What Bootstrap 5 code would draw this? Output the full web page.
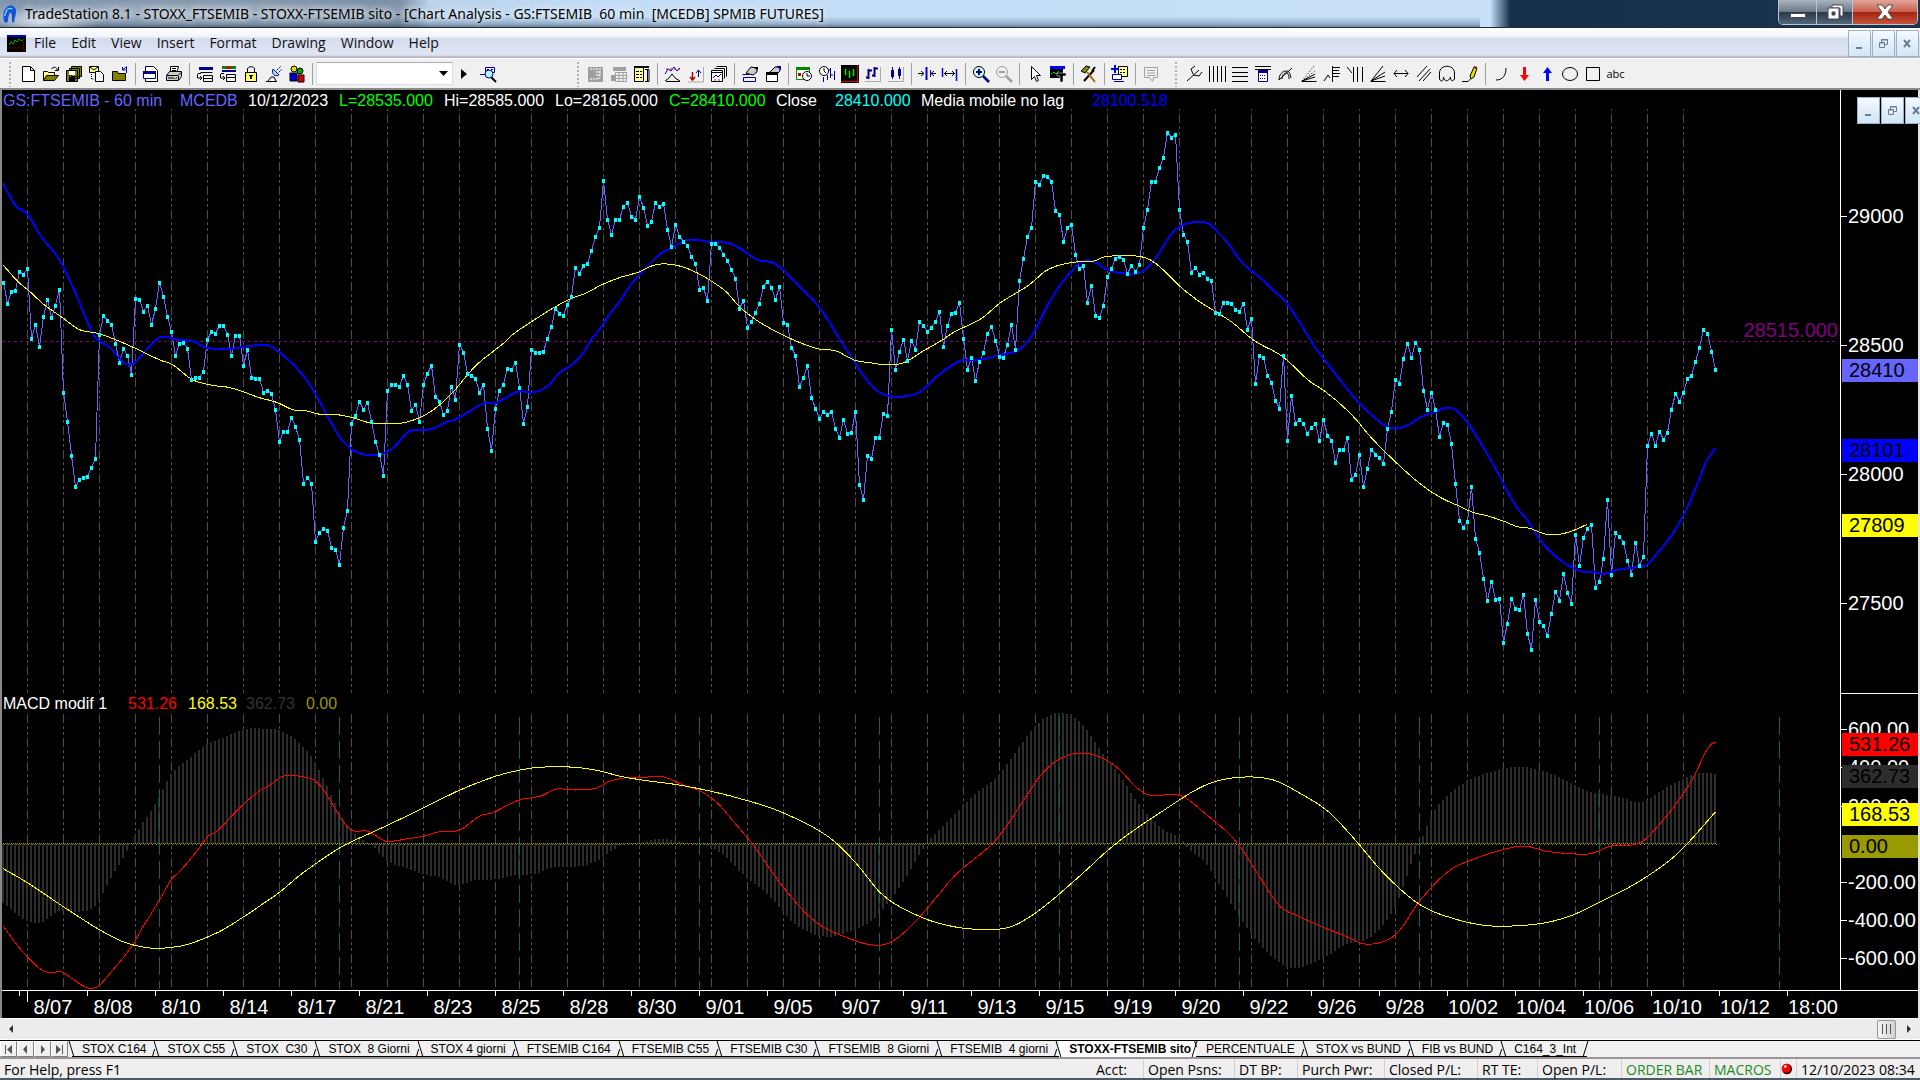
<!DOCTYPE html>
<html lang="en">
<head>
<meta charset="utf-8">
<meta name="viewport" content="width=device-width, initial-scale=1">
<title>TradeStation 8.1 - STOXX_FTSEMIB</title>
<link href="https://cdn.jsdelivr.net/npm/bootstrap@5.3.0/dist/css/bootstrap.min.css" rel="stylesheet">
<style>
  :root { --ui: "Open Sans", "Noto Sans", sans-serif; --plot: "Liberation Sans", Arial, sans-serif; }
  body { font: 14px/20px var(--ui); color: #000; background: #f0f0f0; }
  button, select { font: inherit; color: inherit; }
  .plain-btn { border: 0; padding: 0; background: none; }
  svg { display: block; }

  .title-strip { height: 28px; padding-left: 2px; border-bottom: 1px solid #1c2c3e;
    background:
      radial-gradient(ellipse 60px 14px at 40px 22px, #d5dde6 0, transparent 100%),
      radial-gradient(ellipse 300px 16px at 200px 14px, #c3cedb99 0, transparent 100%),
      linear-gradient(#0000 60%, #33516e55 88%, #22364b88) 0 0 / 1480px 100% no-repeat,
      linear-gradient(90deg, #8095ab 0, #7c90a6 400px, #b9d3ec 430px, #c3ddf6 620px, #c8e1f9 1490px, #16304b 1510px, #1b344f 100%); }
  .title-text { font-family: "Noto Sans", "Open Sans", sans-serif; white-space: pre; text-shadow: 0 0 6px #fff, 0 0 10px #fff8; }
  .win-group { height: 25px; width: 140px; border: 1px solid #b8c4d0; border-top: 0; border-radius: 0 0 5px 5px; overflow: hidden; margin-right: 2px; }
  .win-group button { height: 24px; display: grid; place-items: center; background: linear-gradient(#a9b4bf, #6d7a88 48%, #2a3a4b 52%, #566679); border-right: 1px solid #b8c4d0; }
  .win-min { width: 38px; } .win-max { width: 36px; }
  .win-group .win-close { flex: 1; border-right: 0; background: linear-gradient(#e0a699, #c9604c 48%, #a32410 52%, #c4543a); }

  .menu-strip { height: 30px; background: linear-gradient(#fff 0, #f1f3fa 30%, #d5dcee 34%, #e0e5f4 90%, #b4b4bd 97%); padding: 0 1px 0 7px; }
  .menu-strip a { color: #111; text-decoration: none; padding: 0 7px 0 8px; }
  .mdi-group button { width: 23px; height: 27px; display: grid; place-items: center; border: 1px solid #9db0c4; margin-left: 1px; background: linear-gradient(#f4f9fe, #e2effb 50%, #d3e6f7); }

  .tool-strip { height: 32px; background: #f0f0f0; border-top: 1px solid #fff; border-bottom: 2px solid #8a8a8a; }
  .tool-btn { width: 23px; height: 24px; display: grid; place-items: center; }
  .tool-sep { width: 8px; height: 22px; background: linear-gradient(#a0a0a0, #a0a0a0) 4px 0 / 1px 100% no-repeat; }
  .tool-grip { width: 4px; height: 26px; background: radial-gradient(circle, #b0b0b0 1px, transparent 1px) 0 0 / 4px 4px; }
  .grip-chart { margin-left: 77px; }
  .grip-draw { margin-left: 12px; }
  .abc-btn { font-size: 11px; }
  .combo-box { width: 137px; }
  .combo-box select { width: 100%; height: 23px; appearance: none; border: 1px solid #d9dfe6; border-top-color: #a9adb5; background: #fff; border-radius: 0; }
  .combo-box svg { right: 5px; top: 9px; pointer-events: none; }

  .chart-area { background: #000; border-left: 2px solid #8a8a8a; border-right: 2px solid #e4e4e4; font-family: var(--plot); color: #fff; min-height: 0; }
  .panel-row { min-height: 0; }
  .panel-price { flex: 604 1 0; }
  .panel-macd { flex: 296 1 0; }
  .plot-box { min-width: 0; min-height: 0; }
  .plot-box svg { width: 100%; height: 100%; position: absolute; inset: 0; }
  .plot-box svg * { vector-effect: non-scaling-stroke; fill: none; shape-rendering: crispEdges; }
  .legend-line { left: 1px; font-size: 16px; line-height: 20px; white-space: pre; }
  .price-legend { top: 1px; display: grid; grid-template-columns: 177px 68px 91px 105px 111px 114px 107px 59px 86px 171px auto; }
  .macd-legend { top: 0; display: grid; grid-template-columns: 125px 60px 58px 60px auto; }
  .axis-col { width: 78px; border-left: 1px solid #fff; font-size: 20px; line-height: 23px; }
  .panel-macd .axis-col { border-top: 1px solid #fff; margin-top: -1px; }
  .tick-label, .tick-box { left: 0; right: 0; height: 23px; margin-top: -11px; white-space: nowrap; }
  .tick-label { padding-left: 7px; }
  .tick-label::before { content: ""; position: absolute; left: 0; top: 11px; width: 6px; height: 1px; background: #fff; }
  .tick-box { left: 1px; padding-left: 7px; color: #000; }
  .level-label { right: 2px; font-size: 20px; line-height: 22px; margin-top: -23px; color: #800080; }
  .time-axis { height: 28px; border-top: 1px solid #fff; font-size: 20px; line-height: 24px; overflow: hidden; }
  .time-tick { top: 0; width: 1px; height: 5px; background: #fff; }
  .time-tick.long-tick { height: 11px; }
  .time-text { top: 4px; width: 60px; margin-left: -4px; text-align: center; }
  .mdi-float { right: -2px; top: 7px; width: 64px; overflow: hidden; }
  .mdi-float button { flex: none; }

  .scroll-strip { height: 22px; background: #ececec; border-top: 1px solid #fafafa; border-bottom: 1px solid #fff; padding: 0 5px; }
  .scroll-strip button { width: 12px; height: 18px; display: grid; place-items: center; }
  .scroll-strip .scroll-thumb { width: 19px; height: 19px; border: 1px solid #979797; border-radius: 2px; background: linear-gradient(90deg, #f4f4f4, #d4d4d4); margin-right: 7px; }

  .sheet-strip { height: 19px; background: #f0f0f0; border-top: 1px solid #000; border-bottom: 2px solid #9a9498; font: 12px/17px var(--plot); }
  .sheet-nav button { width: 17px; height: 16px; display: grid; place-items: center; border: 1px solid; border-color: #fff #808080 #808080 #fff; background: #f0f0f0; }
  .sheet-tabs { margin-left: 4px; }
  .sheet-tab { position: relative; height: 16px; padding: 0 11px 0 10px; color: #000; text-decoration: none; white-space: pre; border-bottom: 1px solid #000; }
  .sheet-tab::before { content: ""; position: absolute; left: -1px; top: 0; width: 1px; height: 16px; background: #000; transform: skewX(17deg); }
  .sheet-tab::after { content: ""; position: absolute; right: 3px; bottom: -1px; width: 1px; height: 8px; background: #000; transform: skewX(-17deg); }
  .sheet-tab:last-child::after, .sheet-tab.on::after { height: 16px; right: 1px; }
  .sheet-tab.on { background: #fff; font-weight: bold; border-color: #fff; padding-right: 5px; }
  .sheet-tab.on + .sheet-tab::before { height: 6px; top: 0; }

  .status-strip { height: 21px; background: #f0eeee; border-bottom: 2px solid #4a5a68; font-size: 14px; line-height: 21px; white-space: nowrap; }
  .status-cell { border-left: 1px solid #d2d0d0; padding-left: 4px; height: 19px; }
  .w-a { width: 47px; } .w-b { width: 91px; } .w-c { width: 63px; } .w-d { width: 87px; } .w-e { width: 93px; }
  .w-f { width: 60px; } .w-g { width: 84px; } .w-h { width: 88px; } .w-i { width: 71px; } .w-j { width: 16px; } .w-k { width: 124px; }
  .status-ok { color: #1c8a1c; }
</style>
<script src="https://cdn.jsdelivr.net/npm/bootstrap@5.3.0/dist/js/bootstrap.bundle.min.js"></script>
</head>
<body class="vh-100 d-flex flex-column overflow-hidden">

<header class="title-strip d-flex align-items-start flex-shrink-0">
  <svg class="mt-1 me-2" width="15" height="20" viewBox="0 0 16 20"><path d="M3 19C0 14 1 5 6 2c4-3 9 0 9 5 0 4-2 8-2 12h-2c-1-4 0-8-1-10-2-2-3 2-4 10z" fill="#1450d8"/><path d="M4 8c1-4 5-5 7-3M3 12c0-2 1-4 2-5" fill="none" stroke="#7fd0ff" stroke-width="1.500"/></svg>
  <span class="title-text pt-1">TradeStation 8.1 - STOXX_FTSEMIB - STOXX-FTSEMIB sito - [Chart Analysis - GS:FTSEMIB  60 min  [MCEDB] SPMIB FUTURES]</span>
  <div class="win-group d-flex ms-auto">
    <button class="plain-btn win-min" aria-label="Minimize"><svg width="20" height="16"><rect x="2.500" y="9.500" width="15" height="4" rx="1" fill="#fff" stroke="#445"/></svg></button>
    <button class="plain-btn win-max" aria-label="Restore"><svg width="20" height="18"><path d="M7 2h11v11h-3V5H7z" fill="#fff" stroke="#445"/><path d="M3 5h11v11H3zM7 9v3h3V9z" fill="#fff" fill-rule="evenodd" stroke="#445"/></svg></button>
    <button class="plain-btn win-close" aria-label="Close"><svg width="20" height="16"><path d="M2 1h5l3 4 3-4h5l-5 7 5 7h-5l-3-4-3 4H2l5-7z" fill="#fff" stroke="#555"/></svg></button>
  </div>
</header>

<nav class="menu-strip d-flex align-items-center flex-shrink-0">
  <svg width="19" height="17" viewBox="0 0 19 17"><path d="M0 0h19v17H0z"/><path d="M0 0h19v2H0z" fill="#0000d0"/><path d="M2 10l2-3 2 2 2-4 2 2 2-3 3 2 2-3" fill="none" stroke="#00b000"/><path d="M2 13h15M16.500 3v13" stroke="#700" stroke-dasharray="2 1"/></svg>
  <a href="#">File</a><a href="#">Edit</a><a href="#">View</a><a href="#">Insert</a><a href="#">Format</a><a href="#">Drawing</a><a href="#">Window</a><a href="#">Help</a>
  <div class="mdi-group d-flex ms-auto" data-mdi></div>
</nav>

<div class="tool-strip d-flex align-items-center flex-shrink-0" role="toolbar" aria-label="Tools">
  <span class="tool-grip ms-2 me-1"></span><span data-tools="file"></span>
</div>

<main class="chart-area d-flex flex-column flex-grow-1 position-relative">
  <section class="panel-row panel-price d-flex">
    <div class="plot-box flex-grow-1 position-relative">
      <svg id="pricePlot" viewBox="2 90 1838 604" preserveAspectRatio="none"></svg>
      <div class="legend-line price-legend position-absolute"><span style="color:#6666ff">GS:FTSEMIB - 60 min</span><span style="color:#6666ff">MCEDB</span><span>10/12/2023</span><span style="color:#00ff00">L=28535.000</span><span>Hi=28585.000</span><span>Lo=28165.000</span><span style="color:#00ff00">C=28410.000</span><span>Close</span><span style="color:#00ffff">28410.000</span><span>Media mobile no lag</span><span style="color:#0000ff">28100.518</span></div>
      <div class="level-label position-absolute" style="top:41.700%">28515.000</div>
    </div>
    <div class="axis-col position-relative flex-shrink-0" id="priceAxis"></div>
  </section>
  <section class="panel-row panel-macd d-flex">
    <div class="plot-box flex-grow-1 position-relative">
      <svg id="macdPlot" viewBox="2 694 1838 296" preserveAspectRatio="none"></svg>
      <div class="legend-line macd-legend position-absolute"><span>MACD modif 1</span><span style="color:#ff0000">531.26</span><span style="color:#ffff00">168.53</span><span style="color:#333">362.73</span><span style="color:#999900">0.00</span></div>
    </div>
    <div class="axis-col position-relative flex-shrink-0 overflow-hidden" id="macdAxis"></div>
  </section>
  <div class="time-axis position-relative flex-shrink-0" id="timeAxis"></div>
  <div class="mdi-group mdi-float position-absolute d-flex" data-mdi></div>
</main>

<div class="scroll-strip d-flex align-items-center flex-shrink-0">
  <button class="plain-btn" aria-label="Scroll left"><svg width="6" height="10"><path d="M5 1v8L1 5z" fill="#333"/></svg></button>
  <button class="plain-btn scroll-thumb ms-auto" aria-label="Scroll thumb"><svg width="11" height="10"><path d="M1.500 0v10M5.500 0v10M9.500 0v10" stroke="#555"/></svg></button>
  <button class="plain-btn" aria-label="Scroll right"><svg width="6" height="10"><path d="M1 1v8l4-4z" fill="#333"/></svg></button>
</div>

<nav class="sheet-strip d-flex flex-shrink-0">
  <div class="sheet-nav d-flex">
    <button class="plain-btn" aria-label="First"><svg width="9" height="9"><path d="M1.500 0v9" stroke="#555"/><path d="M8 0v9L3 4.500z" fill="#555"/></svg></button>
    <button class="plain-btn" aria-label="Previous"><svg width="9" height="9"><path d="M6 0v9L2 4.500z" fill="#555"/></svg></button>
    <button class="plain-btn" aria-label="Next"><svg width="9" height="9"><path d="M3 0v9l4-4.500z" fill="#555"/></svg></button>
    <button class="plain-btn" aria-label="Last"><svg width="9" height="9"><path d="M7.500 0v9" stroke="#555"/><path d="M1 0v9l5-4.500z" fill="#555"/></svg></button>
  </div>
  <div class="sheet-tabs d-flex">
    <a class="sheet-tab" href="#">STOX C164</a><a class="sheet-tab" href="#">STOX C55</a><a class="sheet-tab" href="#">STOX  C30</a><a class="sheet-tab" href="#">STOX  8 Giorni</a><a class="sheet-tab" href="#">STOX 4 giorni</a><a class="sheet-tab" href="#">FTSEMIB C164</a><a class="sheet-tab" href="#">FTSEMIB C55</a><a class="sheet-tab" href="#">FTSEMIB C30</a><a class="sheet-tab" href="#">FTSEMIB  8 Giorni</a><a class="sheet-tab" href="#">FTSEMIB  4 giorni</a><a class="sheet-tab on" href="#">STOXX-FTSEMIB sito</a><a class="sheet-tab" href="#">PERCENTUALE</a><a class="sheet-tab" href="#">STOX vs BUND</a><a class="sheet-tab" href="#">FIB vs BUND</a><a class="sheet-tab" href="#">C164_3_Int</a>
  </div>
</nav>

<footer class="status-strip d-flex flex-shrink-0">
  <span class="ps-1 me-auto">For Help, press F1</span>
  <span class="w-a">Acct:</span><span class="status-cell w-b">Open Psns:</span><span class="status-cell w-c">DT BP:</span><span class="status-cell w-d">Purch Pwr:</span><span class="status-cell w-e">Closed P/L:</span><span class="status-cell w-f">RT TE:</span><span class="status-cell w-g">Open P/L:</span><span class="status-cell w-h status-ok">ORDER BAR</span><span class="status-cell w-i status-ok">MACROS</span>
  <span class="status-cell w-j ps-0"><svg class="mt-1" width="12" height="12" viewBox="0 0 14 14"><circle cx="7" cy="7" r="6" fill="#400"/><circle cx="6" cy="6" r="5" fill="#f00"/><circle cx="5" cy="4" r="1.500" fill="#fff"/></svg></span>
  <span class="status-cell w-k">12/10/2023 08:34</span>
</footer>

<script>
/* ---------- toolbar icons, 18 x 18 ---------- */
const K = 'fill="none" stroke="#000"', B = 'fill="none" stroke="#00008b"';
const icons = {
  'New': `<path d="M3.500 1.500h8l4 4v11h-12zM11.500 1.500v4h4" fill="#fff" stroke="#000"/>`,
  'Open': `<path d="M1.500 15.500v-9h4l1 1h6v3" fill="#ffff80" stroke="#000"/><path d="M1.500 15.500l3-5h12l-4 5z" fill="#808000" stroke="#000"/><path d="M9.500 4c2-3 5-2 6 1M16.500 2v3.500H13" ${K}/>`,
  'Save all': `<path d="M6.500 1.500h10v10h-10zM4.500 3.500h10v10h-10zM1.500 5.500h11v11h-11z" fill="#808000" stroke="#000"/><path d="M4 6h6v4H4z" fill="#fff"/><path d="M4 12h6v4H4z"/>`,
  'New from mail': `<path d="M1.500 1.500h9v6h-9z" fill="#ffff80" stroke="#000"/><path d="M2 2l4 3 4-3" ${K}/><path d="M7.500 6.500h5l3 3v7h-8z" fill="#fff" stroke="#000"/><path d="M3.500 9v5h3" stroke-dasharray="1" ${K}/>`,
  'Close folder': `<path d="M1.500 15.500v-9h5l1 2h7v7z" fill="#808000" stroke="#000"/><path d="M12 4.500l4-3M11.500 2v3h3M15.500 2v6" ${B}/>`,
  'Page setup': `<path d="M3.500 1.500h8l4 4v11h-12z" fill="#fff" stroke="#000"/><path d="M1.500 6.500h12v7h-12z" fill="#fff" stroke="#00008b"/><path d="M1 6h13v3H1z" fill="#00008b"/>`,
  'Print': `<path d="M5.500 7V1.500h8L12 7" fill="#fff" stroke="#000"/><path d="M7 3.500h4M7 5.500h4" ${K}/><path d="M1.500 10.500l3-4h12v5l-3 4h-12z" fill="#ccc" stroke="#000"/><path d="M2 10.500h11l3-3M13.500 11v4M3 13h9" ${K}/><path d="M9 12h2v1H9z" fill="#ff0"/>`,
  'Insert row': `<path d="M3 2h14v3H3z" fill="#00008b"/><path d="M4.500 7.500h12M7.500 10.500h9v6h-9zM7 13.500h9M2 8.500h3M1.500 9v4h4M4 11l2 2-2 2" ${K}/>`,
  'Insert colors': `<path d="M3 1h14v3H3z" fill="#080"/><path d="M8 1h4v3H8z" fill="#d00"/><path d="M3 5h14v2H3z" fill="#00008b"/><path d="M7.500 9.500h9v7h-9zM7 12.500h9M2 8.500h3M1.500 9v4h4M4 11l2 2-2 2" ${K}/>`,
  'Lock': `<path d="M5.500 8V4c0-3 7-3 7 0v4" ${K}/><path d="M3.500 7.500h11v9h-11z" fill="#ffff60" stroke="#000"/><path d="M8 10h2v4H8zM7 10h4v1H7z"/>`,
  'Signal': `<path d="M1 16.500h11M3 16l3-4h3l2 4" ${K}/><path d="M8 4c-2 5 2 8 6 6z" fill="#aee8f0" stroke="#00008b"/><path d="M10 7l6-6M12 9l5-5" stroke-dasharray="2 1" ${B}/>`,
  'Blocks': `<circle cx="6" cy="4" r="3" fill="#dd0" stroke="#000"/><circle cx="12" cy="6" r="3" fill="#0a0" stroke="#000"/><path d="M2 8h7v8H2z" fill="#00c" stroke="#000"/><path d="M10 10h6v7h-6z" fill="#c00" stroke="#000"/>`,
  'Run': `<path d="M5 4l6 5-6 5z"/>`,
  'Find symbol': `<path d="M1 9.500h6M6.500 2.500h9v5h-9zM8 4.500h2M12 4.500h2" ${B}/><path d="M12 12l5 5" stroke="#000" stroke-width="2"/><circle cx="10" cy="9" r="4" fill="#aff" stroke="#00008b"/>`,
  'Account': `<path d="M1 2h15v15H1z" fill="#a0a0a0"/><path d="M3 4h12M9 7h6M9 10h6M3 14h9M12 6v8" stroke="#fff" stroke-dasharray="2 1"/>`,
  'Orders': `<path d="M3 2h13v4H3zM1 10h5v6H1z" fill="#a0a0a0"/><path d="M5.500 7.500h11v9h-11zM5 10.500h11M5 13.500h11M9 8v8M13 8v8" fill="none" stroke="#a0a0a0"/>`,
  'Data window': `<path d="M1 1h15v2H1z"/><path d="M1.500 2.500h9v14h-9z" fill="#ff9" stroke="#000"/><path d="M3 6.500h6M3 9.500h6M3 12.500h6" stroke="#000" stroke-dasharray="3 1"/><path d="M12 4.500h4v12h-4M14.500 5v11" ${K}/>`,
  'Indicator': `<path d="M1 9l3-5 3 2 3-4 3 4 3-3" fill="none" stroke="#00c"/><path d="M2 4h14" stroke="#c00" stroke-dasharray="2 2"/><path d="M1 16l4-3 3-4 3 4 5 3M2 16.500h14" ${K}/>`,
  'Strategy': `<path d="M5.500 7v8M3 12l2.500 3L8 12" fill="none" stroke="#a00" stroke-width="1.500"/><path d="M11.500 12V5M9 8l2.500-3L14 8" ${B}/><path d="M16.500 2v15H1" fill="none" stroke="#aaa"/>`,
  'Analysis': `<path d="M6.500 1.500h10v10M4.500 3.500h10v10M1.500 5.500h11v11h-11zM1 7.500h11" fill="#fff" stroke="#000"/><path d="M3 13l3-3 2 2 3-3" ${B}/><path d="M4 15h2M8 15h2" stroke="#c00"/>`,
  'Format symbol': `<path d="M5 8l5-6 6 1v4l-4 3z" fill="#ccc" stroke="#000"/><path d="M11 2h6v3z"/><path d="M1.500 9.500h7M2.500 12.500h12v4h-12z" ${B}/>`,
  'Format window': `<path d="M6 7l5-5h5v4l-3 3z" fill="#ccc" stroke="#000"/><path d="M12 1h5v4z" fill="#00008b"/><path d="M2.500 7.500h11v9h-11z" fill="#fff" stroke="#000"/><path d="M2 7h12v3H2z"/>`,
  'Calendar': `<path d="M1.500 2.500h13v12h-13z" fill="#fff" stroke="#080"/><path d="M1 2h14v3H1z" fill="#080"/><path d="M3 8h3v3H3z" fill="#c00"/><circle cx="12" cy="11" r="4.500" fill="#fff" stroke="#000"/><path d="M12 8v3h3" ${K}/>`,
  'Session': `<circle cx="6" cy="6" r="4.500" fill="#fff" stroke="#000"/><path d="M6 3v3l2 2" ${K}/><path d="M12.500 3v10M10 5h2M13 10h2M16.500 6v9M5.500 12v5M9.500 10v5" ${B}/>`,
  'Chart colors': `<path d="M0 0h18v18H0z"/><path d="M4.500 4v6M8.500 6v7M12.500 4v7" stroke="#0e0" stroke-width="1.500"/><path d="M0 16.500h18M16.500 0v18" stroke="#c00"/>`,
  'Bar style': `<path d="M4.500 4v10M2 12.500h2M5 5.500h3M10.500 2v10M8 10.500h2M11 3.500h3" fill="none" stroke="#00008b" stroke-width="2"/><path d="M16.500 2v14.500H1" fill="none" stroke="#aaa"/>`,
  'Candle style': `<path d="M4 5h3v7H4zM11 4h3v7h-3z" fill="#00008b"/><path d="M5.500 2v12M12.500 2v12" ${B}/><path d="M16.500 2v14.500H1" fill="none" stroke="#aaa"/>`,
  'Decrease spacing': `<path d="M8.500 2v13" stroke="#00c" stroke-width="2"/><path d="M12.500 5v7" stroke="#00c"/><path d="M0 8.500h5M3 6l3 2.500L3 11M18 8.500h-4M16 6l-3 2.500L16 11" ${K}/>`,
  'Increase spacing': `<path d="M1.500 3v9M15.500 4v12" stroke="#00c" stroke-width="1.500"/><path d="M3 8.500h11M6 6L3.500 8.500 6 11M11 6l2.500 2.500L11 11" ${K}/>`,
  'Zoom in': `<path d="M11 11l6 6" stroke="#00008b" stroke-width="2.500"/><circle cx="7" cy="7" r="5.500" fill="#cff" stroke="#000"/><path d="M7 4v6M4 7h6" stroke="#00008b" stroke-width="2"/>`,
  'Zoom out': `<path d="M11 11l6 6" stroke="#a0a0a0" stroke-width="2.500"/><circle cx="7" cy="7" r="5.500" fill="none" stroke="#a0a0a0"/><path d="M4 7h6" stroke="#a0a0a0" stroke-width="2"/>`,
  'Pointer': `<path d="M5.500 1.500v13l3-3 2 5 2-1-2-5h4z" fill="#fff" stroke="#000"/>`,
  'Text tool': `<path d="M1 1h15v3H1z" fill="#00f"/><path d="M1 4h13v9H1z"/><path d="M2 9l3-2 2 2 3-3" stroke="#0c0" fill="none"/><path d="M8 8h9v3h-3v6h-3v-6H8z" stroke="#fff" stroke-width=".5"/>`,
  'Build': `<path d="M4 16L14 5" stroke="#000" stroke-width="2"/><path d="M1 6l5-5 4 1-5 6z" fill="#880" stroke="#000"/><path d="M7 7l8 10" stroke="#a60" stroke-width="2"/><path d="M12 6l3-4" stroke="#000" stroke-width="2"/>`,
  'Add workspace': `<path d="M4 0v8M0 4h8" stroke="#00f" stroke-width="2"/><path d="M7.500 1.500h9v10h-9z" fill="#ff9" stroke="#000"/><path d="M9 4.500h6M9 7.500h6" stroke="#000" stroke-dasharray="2 1"/><path d="M1.500 9.500h9v5h-9zM3 16.500h10" fill="#fff" stroke="#00008b"/>`,
  'Comment': `<path d="M2.500 2.500h13v10h-4l-1 4-3-4h-5z" fill="none" stroke="#a0a0a0"/><path d="M5 5.500h8M5 8h8M5 10.500h8" stroke="#a0a0a0"/>`,
  'Pitchfork': `<path d="M2 16L14 5M8 9L6 4l4-3M8 10l6 1 3-4" ${K}/>`,
  'Vertical lines': `<path d="M1.500 1v16M5.500 1v16M9.500 1v16M13.500 1v16M17.500 1v16" ${K}/>`,
  'Horizontal lines': `<path d="M1 2.500h16M1 7.500h16M1 11.500h16M1 16.500h16" ${K}/>`,
  'Calculator lines': `<path d="M1 1.500h16M1 4.500h16" ${K}/><path d="M4.500 5.500h9v11h-9z" fill="#fff" stroke="#00008b"/><path d="M4 5h10v3H4z" fill="#00008b"/><path d="M6 10.500h6M6 13.500h6" stroke="#00008b" stroke-dasharray="1 1"/>`,
  'Arcs': `<path d="M2 15c0-6 4-9 7-9s4 2 5 7M5 14c0-4 2-6 4-6s3 2 3 6M2 15L15 3" ${K}/>`,
  'Fan dotted': `<path d="M1.500 16.500h15M2 16L15 9M2 16l13-4" ${K}/><path d="M2 16L14 1M2 16L16 5" stroke-dasharray="1 2" ${K}/>`,
  'Retracement': `<path d="M1 16l4-6 2 3M9.500 1v16M10 2.500h7M10 5.500h6M10 8.500h7M10 11.500h6" ${K}/>`,
  'Time zones': `<path d="M1 2l5 6M7.500 2v15M11.500 2v15M16.500 2v15" ${K}/>`,
  'Speed lines': `<path d="M1.500 16.500h15M2 16L14 1M2 16l14-9M2 16l14-5" ${K}/>`,
  'Extend': `<path d="M2 8.500h14M5 5L2 8.500 5 12M13 5l3 3.500-3 3.500" ${K}/>`,
  'Parallel': `<path d="M2 12L12 1M4 16L15 4M8 16l8-9" ${K}/>`,
  'Cycle': `<path d="M1.500 14V8c0-9 15-9 15 0v6M1.500 14c2 4 4 2 4-2 1 5 5 5 7 0 0 4 2 5 4 2" ${K}/>`,
  'Pencil': `<path d="M1 16.500h6l3-3" ${K}/><path d="M9 11l4-9 3 1-3 9-3 2z" fill="#dd0" stroke="#000"/><path d="M13 1l3 1v2l-3-1z" fill="#900"/>`,
  'Curve': `<path d="M4 15c7 0 10-5 10-12" ${K}/>`,
  'Down arrow': `<path d="M8 2h3v8h3l-4.500 6L5 10h3z" fill="#f00"/>`,
  'Up arrow': `<path d="M8 16h3V8h3L9.500 2 5 8h3z" fill="#00f"/>`,
  'Ellipse': `<ellipse cx="9" cy="9" rx="7.500" ry="6.500" ${K}/>`,
  'Rectangle': `<path d="M2.500 2.500h13v13h-13z" ${K}/>`
};
const btn = n => `<button class="plain-btn tool-btn" aria-label="${n}"><svg width="18" height="18" viewBox="0 0 18 18">${icons[n]}</svg></button>`;
const groups = list => list.map(g => g.map(btn).join('')).join('<span class="tool-sep"></span>');
document.querySelector('[data-tools]').outerHTML =
  groups([['New','Open','Save all','New from mail','Close folder'], ['Page setup','Print'], ['Insert row','Insert colors','Lock','Signal','Blocks']]) +
  `<span class="tool-sep"></span><span class="combo-box position-relative"><select aria-label="Symbol"><option></option></select><svg class="position-absolute" width="9" height="6"><path d="M0 0h9L4.500 5z"/></svg></span>` +
  btn('Run') + btn('Find symbol') + `<span class="tool-grip grip-chart"></span><span class="ps-1"></span>` +
  groups([['Account','Orders','Data window'], ['Indicator','Strategy','Analysis'], ['Format symbol','Format window'], ['Calendar','Session','Chart colors','Bar style','Candle style'], ['Decrease spacing','Increase spacing'], ['Zoom in','Zoom out'], ['Pointer','Text tool'], ['Build'], ['Add workspace'], ['Comment']]) +
  `<span class="tool-grip grip-draw me-1"></span>` +
  groups([['Pitchfork','Vertical lines','Horizontal lines','Calculator lines','Arcs','Fan dotted','Retracement','Time zones','Speed lines','Extend','Parallel','Cycle','Pencil'], ['Curve','Down arrow','Up arrow','Ellipse','Rectangle']]) +
  `<button class="plain-btn tool-btn abc-btn">abc</button>`;

document.querySelectorAll('[data-mdi]').forEach(g => g.innerHTML =
  `<button class="plain-btn" aria-label="Minimize chart"><svg width="11" height="11"><path d="M2 9h6v2H2z" fill="#6b7f93"/></svg></button>
   <button class="plain-btn" aria-label="Restore chart"><svg width="11" height="11"><path d="M3.500 4V1.500h6v5H7M1.500 4.500h5v5h-5zM3 2h7M1 5h6" fill="none" stroke="#6b7f93"/></svg></button>
   <button class="plain-btn" aria-label="Close chart"><svg width="11" height="11"><path d="M2 2l6 7M8 2L2 9" stroke="#6b7f93" stroke-width="2"/></svg></button>`);

/* ---------- price series: one close every 4 units, values in thirds of a unit below each block's top ---------- */
const closes = [
  [120, `486 548 513 510 453 462 444 654 612 678 588 537 591 555 507 816 903 1005 1098 1077 1071 1068 1041 1014 642 585 600 612 669 726 684 705 762 534 537 573 555 612 564 486 528 588 633 705 669 666 684 777 771 771 753 657 633 639 615 615 642 705 645 645 735 687 771 774 774 816 810 819 867 963 933 933 891 918 957 1089 1071 1089 1263 1236 1224 1230 1281 1287 1332 1221 1170 909 885 843 867 846 903 963 1002 1065 810 792 792 798 765 792 870 852 903 792 759 735 828 843 882 870 798 837 671 696 759 765 774 816 792 924 990 864 810 792 744 747 726 801 909 858 687 696 696 693 654 618 564 579 585 552 528 441 459 435 429 390 348 321 180 297 342 297 297 258 246 288 297 228
   261 315 303 246 258 249 327 378 312 348 363 375 408 429 507 501 540 369 369 381 402 420 447 474 564 540 621 603 576 549 498 483 501 537 498 606 612 681 705 798 771 735 831 864 894 873 882 873 924 951 897 939 936 873 1092 1137 1005 1014 951 951 879 885 627 747 693 657 720 660 687 603 615 633 621 603 573 678 615 579 576 546 654 747 711 780 723 696 639 618 660 708 711 672 612 687 480 414 348 321 183 192 165 168 183 270 282 363 321 312 402 444 435 546 495 585 591 555 468 444 414 408 417 459 435 453 432 321 267 183 183 141 111 36 51 42 267 342 363 456 441 462 456 474 480 576 579 546 546 549 567 573`],
  [280, `69 147 114 309 225 231 285 306 360 384 225 480 345 429 417 429 459 441 429 480 417 465 480 546 507 507 471 597 582 522 618 564 507 522 531 549 444 393 297 309 234 189 231 186 207 330 387 336 387 468 426 432 489 609 720 741 723 618 774 816 894 960 903 957 954 1086 1029 954 984 987 942 1059 1107 957 1023 1035 1065 999 933 960 879 936 969 762 855 771 744 732 921 903 834 657 882 756 768 786 840 882 786 855 828 495 459 495 453 477 456 387 339 363 336 294 285 243 201 147 159 213 267`]
];
const price = closes.flatMap(([top, v]) => v.trim().split(/\s+/).map(n => top + n / 3));

/* curves: blocks of [x origin, x scale, y origin, y scale, "x,y ..."], joined by a smooth hermite line */
const knots = blocks => blocks.flatMap(([x0, kx, y0, ky, s]) =>
  s.trim().split(/\s+/).map(p => { const [x, y] = p.split(',').map(Number); return [x0 + x / kx, y0 + y / ky]; }));
const smooth = p => {
  const d = p.slice(1).map((q, i) => (q[1] - p[i][1]) / (q[0] - p[i][0]));
  const m = p.map((_, i) => i === 0 ? d[0] : i === p.length - 1 ? d[i - 1] : (d[i - 1] + d[i]) / 2);
  const out = [];
  for (let i = 0; i < d.length; i++) {
    const h = p[i + 1][0] - p[i][0], n = Math.max(1, Math.round(h / 4));
    for (let j = 0; j < n; j++) {
      const t = j / n, a = t * t * t, b = t * t;
      out.push([p[i][0] + t * h, (2*a - 3*b + 1) * p[i][1] + (a - 2*b + t) * h * m[i] + (3*b - 2*a) * p[i + 1][1] + (a - b) * h * m[i + 1]]);
    }
  }
  return [...out, p[p.length - 1]];
};
const curve = blocks => smooth(knots(blocks));
const A = [0, 2.45, 120, 3], M = [640, 2.6133, 120, 3], Z = [1200, 2.9037, 280, 3], L = [0, 2.45, 680, 3], R = [0, 0.81667, 0, 0.81667];
const maBlue = curve([
  [...A, '8,190 37,256 67,282 98,345 145,418 180,505 234,654 250,668 270,683 305,730 325,732 355,695 392,651 405,650 430,658 480,667 500,681 570,686 600,680 640,675 660,677 680,693 735,755 768,812 800,884 835,955 855,982 885,1001 940,1001 968,978 1000,935 1015,930 1045,930 1070,922 1095,905 1115,899 1140,882 1185,850 1215,849 1245,829 1275,813 1300,818 1340,800 1370,759 1400,735 1430,697 1450,655 1466,633 1495,580 1515,550 1545,495'],
  [...M, '0,463 30,426 55,400 85,383 115,362 150,359 180,366 215,366 250,377 285,404 310,421 345,427 370,445 410,493 465,557 500,616 520,655 550,706 575,752 605,797 640,825 675,830 700,828 730,817 770,775 810,740 840,721 880,719 910,715 940,704 985,693 1015,662 1035,625 1070,546 1100,492 1130,451 1155,424 1185,424 1215,446 1240,456 1305,458 1325,444 1350,410 1390,340 1410,320 1440,308 1470,306 1490,313 1510,337 1535,367 1568,421'],
  [...Z, '182,0 225,42 245,60 290,128 335,203 395,284 440,343 475,383 510,415 544,442 580,444 610,432 640,412 680,396 720,383 740,388 780,432 800,464 850,550 900,648 925,690 945,712 985,776 1015,813 1050,844 1080,862 1115,876 1145,876 1170,882 1215,869 1250,863 1285,860 1305,848 1330,817 1368,768 1415,683 1450,596 1472,540 1497,505']]);
const maYellow = curve([
  [...A, '8,436 50,492 67,508 106,552 150,590 195,629 240,640 285,660 330,684 400,724 420,732 470,778 520,796 555,801 600,817 630,831 680,848 720,870 750,872 780,882 825,884 860,892 905,908 930,910 980,910 1035,889 1080,852 1110,816 1165,738 1240,663 1255,645 1300,607 1350,568 1400,535 1430,522 1480,491 1520,472'],
  [...M, '0,455 30,438 55,432 100,437 150,459 190,486 225,515 260,560 300,597 340,625 400,659 470,688 510,692 560,720 600,728 650,735 690,728 740,693 790,660 815,640 895,593 940,550 1020,492 1060,453 1100,434 1150,425 1185,424 1210,412 1260,407 1320,413 1345,428 1420,508'],
  [...Z, '0,66 45,95 95,128 155,180 240,230 320,305 360,332 440,404 500,476 560,538 640,612 705,656 750,677 800,700 830,706 880,723 925,741 950,743 1010,764 1045,763 1090,749 1124,733']]);
const macdRed = curve([
  [...L, '8,738 45,800 67,830 100,868 125,878 150,875 170,890 200,915 225,926 237,922 280,865 325,795 350,740 363,716 400,640 420,598 440,575 495,493 510,468 530,455 580,392 630,338 665,312 690,290 740,290 772,302 800,343 830,405 860,450 900,453 925,470 945,484 970,482 1000,476 1040,468 1075,455 1125,451 1180,405 1200,401 1270,361 1330,346 1360,328 1410,330 1465,323 1490,306 1535,293 1568,294'],
  [...R, '540,634 560,642 572,646 585,655 600,672 615,690 640,725 665,752 690,765 718,772 730,768 750,750 780,715 815,684 835,655 850,633 865,620 882,615 895,617 910,625 935,648 965,650 985,665 1010,688 1030,718 1045,740 1060,748 1080,757 1100,765 1115,771 1140,763 1160,735 1185,710 1200,703 1220,696 1245,691 1262,695 1280,697 1300,697 1315,691 1340,688 1352,677 1380,640 1397,608 1401,606']]);
const macdYellow = curve([
  [...L, '8,566 67,608 155,680 245,750 295,782 330,796 380,805 420,802 460,793 510,770 545,750 600,708 640,675 690,632 730,590 775,550 832,504 870,480 912,457 1000,406 1060,370 1120,334 1214,289 1275,270 1320,262 1410,262 1470,273 1520,289 1568,299'],
  [...R, '560,642 600,651 640,664 680,686 700,706 720,730 750,748 775,756 800,759 825,757 845,746 880,717 910,690 950,662 985,641 1010,635 1040,637 1060,647 1085,663 1105,684 1130,713 1160,739 1190,751 1215,756 1240,756 1265,753 1285,747 1310,735 1340,719 1370,697 1401,663']]);
const histo = curve([
  [...L, '8,667 35,695 67,722 105,726 145,694 195,696 234,678 270,600 300,540 322,492 340,450 385,365 420,283 460,240 510,192 545,175 585,155 625,144 655,147 692,153 735,190 772,245 800,312 830,390 860,450 905,490 920,505 950,543 1000,566 1045,585 1080,592 1115,614 1170,600 1215,598 1260,586 1310,582 1360,561 1400,562 1460,545 1500,512 1525,495 1568,487'],
  [...R, '540,685 560,688 570,689 590,697 605,712 630,733 650,755 675,765 690,762 712,752 735,725 750,700 757,689 775,670 795,650 815,634 830,614 845,594 860,583 872,583 885,592 900,614 915,633 930,656 950,677 965,685 970,692 985,705 1010,745 1030,772 1053,790 1080,783 1100,771 1120,765 1140,740 1155,700 1160,689 1170,665 1195,640 1220,630 1243,626 1270,633 1300,647 1320,650 1342,655 1355,647 1375,636 1390,631 1401,632']]);

const X = i => 3.5 + 4 * i;
const line = (pts, color, w = 1) => `<polyline points="${pts.map(p => p.map(n => n.toFixed(1)).join(',')).join(' ')}" stroke="${color}" stroke-width="${w}"/>`;
const days = [...Array(47).keys()].map(k => 27.5 + 36 * k);
const weeks = [...Array(10).keys()].map(k => 159.5 + 180 * k);
const vlines = (xs, y1, y2, attrs) => `<path d="${xs.map(x => `M${x} ${y1}V${y2}`).join('')}" ${attrs}/>`;

document.getElementById('pricePlot').innerHTML =
  vlines(days, 109, 693, 'stroke="#4d4d4d" stroke-dasharray="9 3 3 3 3 3" stroke-dashoffset="19"') +
  '<path d="M2 341.500H1838" stroke="#800080" stroke-dasharray="3 3"/>' +
  line(price.map((y, i) => [X(i), y + .5]), '#6666ff') + line(maBlue, '#0000ff', 2) + line(maYellow, '#ffff00') +
  `<path d="${price.map((y, i) => `M${X(i)} ${Math.round(y)}v1`).join('')}" stroke="#00ffff" stroke-width="3" stroke-linecap="square"/>`;

const level = x => {
  const k = Math.max(1, histo.findIndex(p => p[0] >= x)), [a, b] = [histo[k - 1], histo[k]];
  return a[1] + (b[1] - a[1]) * (x - a[0]) / (b[0] - a[0]);
};
document.getElementById('macdPlot').innerHTML =
  vlines(days, 714, 987, 'stroke="#4d4d4d" stroke-dasharray="9 3 3 3 3 3"') +
  `<path d="${price.map((_, i) => `M${X(i) - .5} 844V${level(Math.min(X(i), 1715)).toFixed(0)}`).join('')}" stroke="#2d2d2d" stroke-width="2"/>` +
  vlines(weeks, 717, 989, 'stroke="#006666" stroke-dasharray="18 6"') +
  '<path d="M3 843.500H1717" stroke="#999900" stroke-dasharray="1 1"/><path d="M4 844.500H1717" stroke="#999900" stroke-dasharray="1 3"/>' +
  line(macdRed, '#ff0000') + line(macdYellow, '#ffff00');

/* ---------- axes ---------- */
const pct = (v, from, size) => ((v - from) / size * 100).toFixed(2) + '%';
const axis = (id, from, size, labels, boxes) => document.getElementById(id).innerHTML =
  labels.map(([t, y]) => `<div class="tick-label position-absolute" style="top:${pct(y, from, size)}">${t}</div>`).join('') +
  boxes.map(([t, y, bg]) => `<div class="tick-box position-absolute" style="top:${pct(y, from, size)};background:${bg}">${t}</div>`).join('');
axis('priceAxis', 90, 604, [['29000', 216], ['28500', 345], ['28000', 474], ['27500', 603]],
  [['28410', 370, '#6666ff'], ['28101', 450, '#0000ff'], ['27809', 525, '#ffff00']]);
axis('macdAxis', 694, 296, [['600.00', 729], ['400.00', 767], ['200.00', 806], ['-200.00', 882], ['-400.00', 920], ['-600.00', 958]],
  [['531.26', 744, '#ff0000'], ['362.73', 776, '#2d2d2d'], ['168.53', 814, '#ffff00'], ['0.00', 846, '#999900']]);

const dates = ['8/08','8/10','8/14','8/17','8/21','8/23','8/25','8/28','8/30','9/01','9/05','9/07','9/11','9/13','9/15','9/19','9/20','9/22','9/26','9/28','10/02','10/04','10/06','10/10','10/12','18:00'];
const ticks = [['8/07', 27], ...dates.map((d, k) => [d, 87 + 68 * k])];
document.getElementById('timeAxis').innerHTML = `<i class="time-tick position-absolute" style="left:${pct(19, 2, 1916)}"></i>` +
  ticks.map(([d, x], k) => `<i class="time-tick position-absolute${k ? '' : ' long-tick'}" style="left:${pct(x, 2, 1916)}"></i><span class="time-text position-absolute" style="left:${pct(x, 2, 1916)}">${d}</span>`).join('');
</script>
</body>
</html>
